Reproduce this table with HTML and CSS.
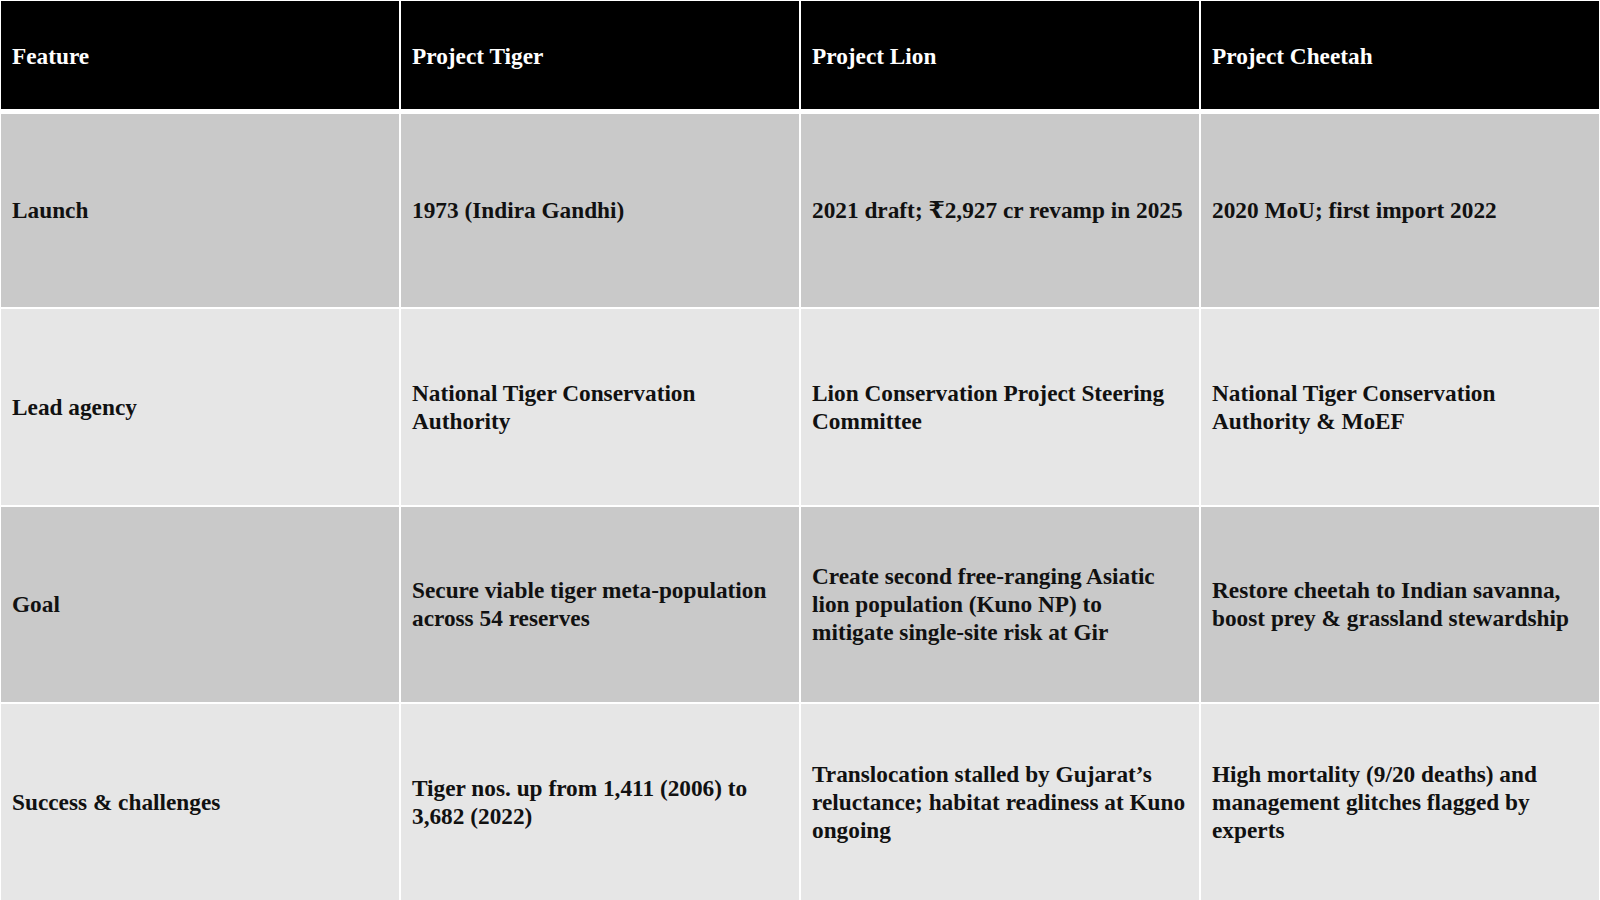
FILE: index.html
```html
<!DOCTYPE html>
<html>
<head>
<meta charset="utf-8">
<link rel="stylesheet" href="styles.css">
</head>
<body>
<div class="table">
  <div class="cell head">Feature</div>
  <div class="cell head">Project Tiger</div>
  <div class="cell head">Project Lion</div>
  <div class="cell head">Project Cheetah</div>

  <div class="cell dark">Launch</div>
  <div class="cell dark">1973 (Indira Gandhi)</div>
  <div class="cell dark">2021 draft; ₹2,927 cr revamp in 2025</div>
  <div class="cell dark">2020 MoU; first import 2022</div>

  <div class="cell light">Lead agency</div>
  <div class="cell light">National Tiger Conservation Authority</div>
  <div class="cell light">Lion Conservation Project Steering Committee</div>
  <div class="cell light">National Tiger Conservation Authority &amp; MoEF</div>

  <div class="cell dark">Goal</div>
  <div class="cell dark">Secure viable tiger meta-population across 54 reserves</div>
  <div class="cell dark">Create second free-ranging Asiatic lion population (Kuno NP) to mitigate single-site risk at Gir</div>
  <div class="cell dark">Restore cheetah to Indian savanna, boost prey &amp; grassland stewardship</div>

  <div class="cell light">Success &amp; challenges</div>
  <div class="cell light">Tiger nos. up from 1,411 (2006) to 3,682 (2022)</div>
  <div class="cell light">Translocation stalled by Gujarat’s reluctance; habitat readiness at Kuno ongoing</div>
  <div class="cell light">High mortality (9/20 deaths) and management glitches flagged by experts</div>
</div>
</body>
</html>
```

FILE: styles.css
```css
html, body {
  margin: 0;
  padding: 0;
  background: #ffffff;
  overflow: hidden;
}

.table {
  display: grid;
  grid-template-columns: repeat(4, 398px);
  grid-template-rows: 111px 193px 196px 195px 196px;
  gap: 2px;
  padding: 1px;
  background: #ffffff;
  font-family: "Liberation Serif", "Times New Roman", "DejaVu Serif", serif;
  font-weight: bold;
  font-size: 23.3px;
  line-height: 28px;
}

.cell {
  display: flex;
  align-items: center;
  padding: 0 12px 0 11px;
  box-sizing: border-box;
  color: #111111;
}

.head {
  height: 108px;
  padding-top: 1px;
  align-self: start;
  background: #000000;
  color: #ffffff;
}

.dark {
  background: #c9c9c9;
  padding-bottom: 2px;
}

.light {
  background: #e6e6e6;
}
```
